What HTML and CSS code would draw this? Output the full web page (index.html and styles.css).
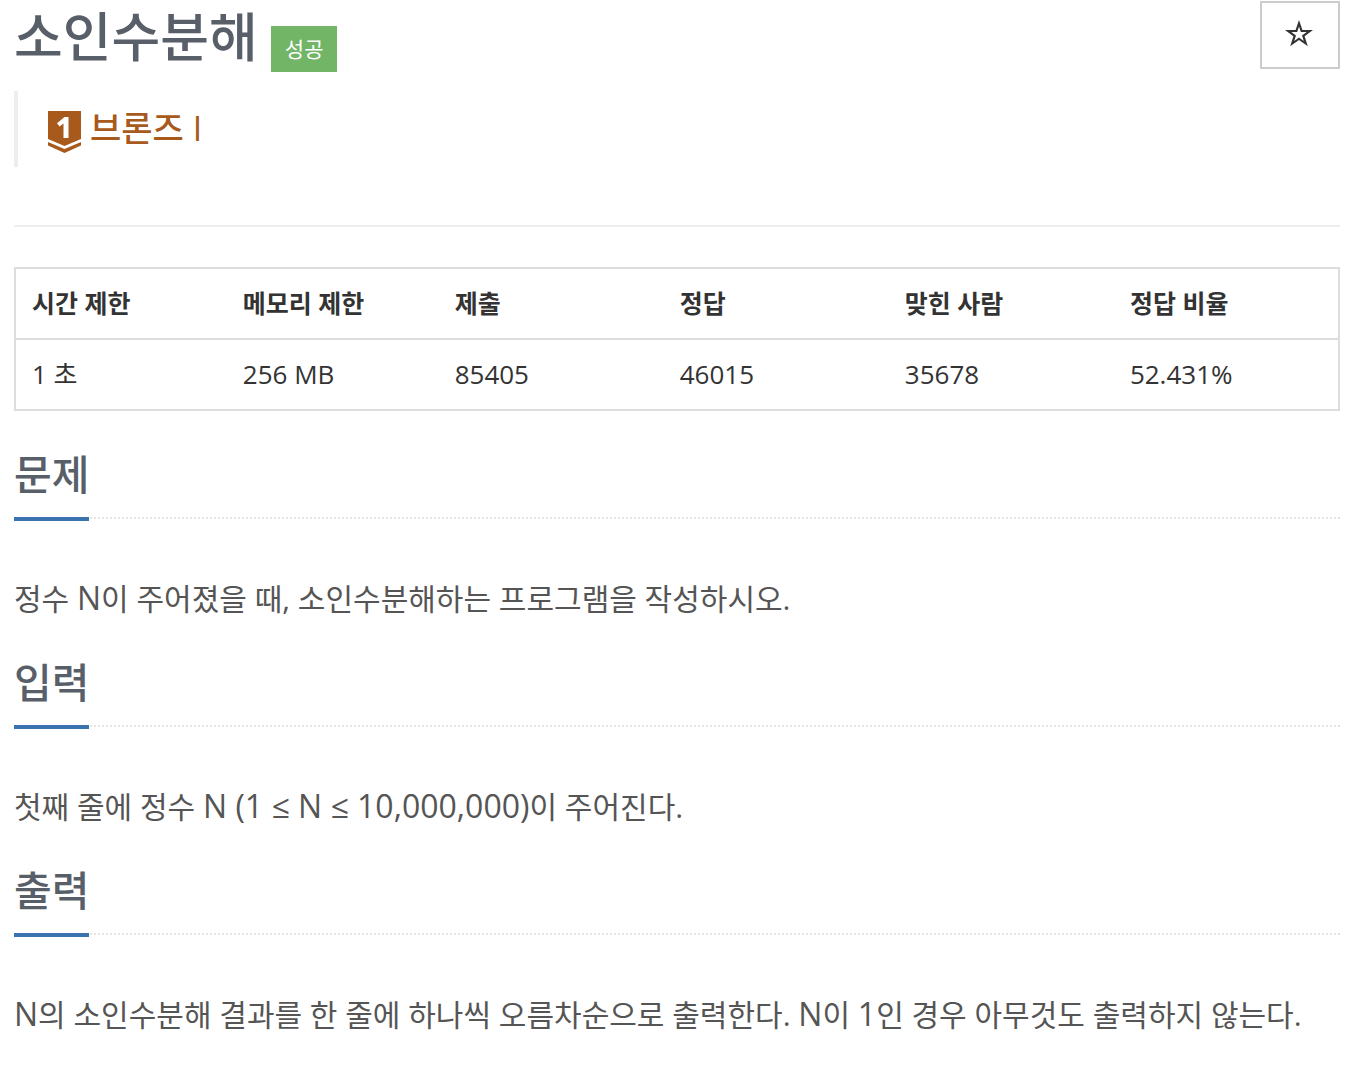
FILE: index.html
```html
<!DOCTYPE html>
<html lang="ko">
<head>
    <meta charset="UTF-8">
    <meta name="viewport" content="width=device-width, initial-scale=1.0">
    <title>소인수분해</title>
    <link rel="stylesheet" href="styles.css">
</head>
<body>
    <div class="container">
        <header class="page-header">
            <div class="title-row">
                <h1>소인수분해</h1>
                <span class="label-success">성공</span>
                <button type="button" class="btn-star" aria-label="즐겨찾기">
                    <svg width="30" height="30" viewBox="0 0 30 30" aria-hidden="true">
                        <path fill="#333" fill-rule="evenodd" d="M14 0 L17.400 10 H28 L19.600 16.200 L22.800 26.200 L14 20 L5.200 26.200 L8.400 16.200 L0 10 H10.600 Z M14 6.500 L12.200 12 H6.300 L11 15.500 L9.200 21 L14 17.600 L18.800 21 L17 15.500 L21.700 12 H15.800 Z"/>
                    </svg>
                </button>
            </div>
            <blockquote class="tier">
                <svg class="tier-icon" width="33" height="42" viewBox="0 0 33 42" aria-hidden="true">
                    <path d="M0 0 H33 V28 L16.500 35 L0 28 Z" fill="#a8591c"/>
                    <path d="M0 31 L16.500 38 L33 31 V34.500 L16.500 42 L0 34.500 Z" fill="#a8591c"/>
                    <path d="M15.500 27 V12.500 L11.500 15.500 L9 12.300 L16.500 6 H20.500 V27 Z" fill="#fff"/>
                </svg>
                <span>브론즈 I</span>
            </blockquote>
        </header>

        <table class="info-table">
            <thead>
                <tr>
                    <th class="col-limit">시간 제한</th>
                    <th class="col-limit">메모리 제한</th>
                    <th class="col-count">제출</th>
                    <th class="col-count">정답</th>
                    <th class="col-count">맞힌 사람</th>
                    <th>정답 비율</th>
                </tr>
            </thead>
            <tbody>
                <tr>
                    <td>1 초</td>
                    <td>256 MB</td>
                    <td>85405</td>
                    <td>46015</td>
                    <td>35678</td>
                    <td>52.431%</td>
                </tr>
            </tbody>
        </table>

        <section>
            <div class="headline"><h2>문제</h2></div>
            <p>정수 <span class="math">N</span>이 주어졌을 때, 소인수분해하는 프로그램을 작성하시오.</p>
        </section>
        <section>
            <div class="headline"><h2>입력</h2></div>
            <p>첫째 줄에 정수 <span class="math">N (1 ≤ N ≤ 10,000,000)</span>이 주어진다.</p>
        </section>
        <section>
            <div class="headline"><h2>출력</h2></div>
            <p><span class="math">N</span>의 소인수분해 결과를 한 줄에 하나씩 오름차순으로 출력한다. <span class="math">N</span>이 <span class="math">1</span>인 경우 아무것도 출력하지 않는다.</p>
        </section>
    </div>
</body>
</html>
```

FILE: styles.css
```css
* {
    margin: 0;
    padding: 0;
    box-sizing: border-box;
}

body {
    font-family: "Open Sans", "Noto Sans CJK KR", sans-serif;
    color: #333;
    background: #fff;
}

.container {
    padding: 1px 10px 0 14px;
}

.page-header {
    padding-bottom: 58px;
    border-bottom: 2px solid #eee;
    margin-bottom: 40px;
}

.title-row {
    display: flex;
    align-items: flex-start;
}

h1 {
    font-size: 53px;
    line-height: 72px;
    font-weight: 500;
    color: #585f69;
}

.label-success {
    margin: 25px 0 0 13px;
    padding: 0 14px;
    font-size: 21px;
    line-height: 46px;
    color: #fff;
    background: #72b567;
}

.btn-star {
    display: flex;
    align-items: center;
    justify-content: center;
    width: 80px;
    height: 68px;
    margin-left: auto;
    border: 2px solid #ccc;
    background: #fff;
    cursor: pointer;
}

.tier {
    display: flex;
    align-items: flex-start;
    gap: 9px;
    margin-top: 18px;
    padding: 12px 0 14px 30px;
    border-left: 4px solid #eee;
    font-size: 34px;
    line-height: 50px;
    font-weight: 500;
    color: #a8591c;
}

.tier-icon {
    margin-top: 8px;
}

.info-table {
    width: 100%;
    margin-bottom: 33px;
    border: 2px solid #ddd;
    border-collapse: collapse;
    table-layout: fixed;
    font-size: 26px;
    line-height: 37px;
}

.info-table th,
.info-table td {
    padding: 16px;
    text-align: left;
    border-bottom: 2px solid #ddd;
}

.info-table th {
    font-size: 25px;
}

.col-limit {
    width: 16%;
}

.col-count {
    width: 17%;
}

.headline {
    display: flex;
    margin-bottom: 55px;
    border-bottom: 2px dotted #e4e4e4;
}

h2 {
    margin-bottom: -4px;
    padding-bottom: 13px;
    border-bottom: 4px solid #3a73ad;
    font-size: 41px;
    line-height: 60px;
    font-weight: 500;
    color: #585f69;
}

p {
    margin-bottom: 28px;
    font-size: 30px;
    line-height: 50px;
    color: #555;
}

.math {
    font-size: 32px;
    line-height: 1;
}
```
